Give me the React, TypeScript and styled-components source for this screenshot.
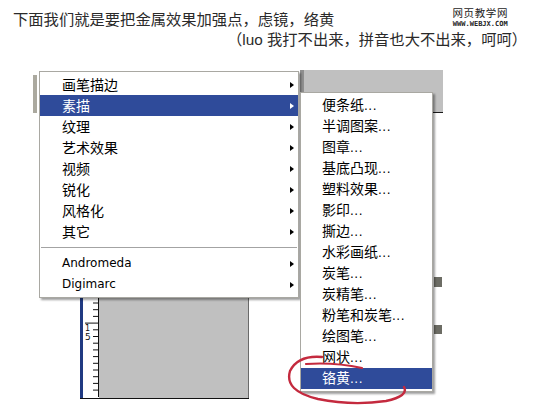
import React from "react";
import styled, { createGlobalStyle } from "styled-components";

const GlobalStyle = createGlobalStyle`
  html, body {
    margin: 0;
    padding: 0;
    background: #ffffff;
  }
  body {
    width: 558px;
    height: 406px;
    overflow: hidden;
    font-family: "Noto Sans CJK SC", sans-serif;
  }
`;

const Page = styled.div`
  position: relative;
  width: 558px;
  height: 406px;
  overflow: hidden;
`;

const Header = styled.header`
  display: flex;
  flex-direction: column;
  padding: 8px 0 0 13px;
  height: 52px;
  box-sizing: border-box;
  color: #2a2a2a;
  font-size: 15.3px;
  line-height: 20px;
`;

const TopRow = styled.div`
  display: flex;
  justify-content: space-between;
  align-items: flex-start;
  height: 20px;
  padding-right: 50px;
`;

const TitleLine = styled.div<{ $indent?: number }>`
  white-space: nowrap;
  padding-left: ${(p) => p.$indent ?? 0}px;
`;

const Latin = styled.span`
  font-family: "Liberation Sans", "Noto Sans CJK SC", sans-serif;
`;

const Watermark = styled.div`
  display: flex;
  flex-direction: column;
  align-items: center;
  margin-top: -3px;
  color: #1c1c1c;
`;

const MarkName = styled.div`
  font-size: 10.5px;
  line-height: 15px;
  letter-spacing: 0.6px;
`;

const MarkUrl = styled.div`
  font-family: "DejaVu Sans Mono", monospace;
  font-size: 7px;
  font-weight: bold;
  line-height: 8px;
`;

// pieces of the photoshop window sitting behind the menus
const Backdrop = styled.div<{ $x: number; $y: number; $w: number; $h: number }>`
  position: absolute;
  left: ${(p) => p.$x}px;
  top: ${(p) => p.$y}px;
  width: ${(p) => p.$w}px;
  height: ${(p) => p.$h}px;
`;

const ScrollBit = styled(Backdrop)`
  background: #aba99f;
`;

const Tab = styled(Backdrop)`
  background: #6c6c64;
`;

const GrayArea = styled(Backdrop)`
  background: #c0c0c0;
  border-left: 4px solid #8f8f8f;
  border-bottom: 1px solid #1a1a1a;
  box-sizing: border-box;
`;

const DocWindow = styled(Backdrop)`
  display: flex;
  border-bottom: 1px solid #111;
`;

const RulerBar = styled.div`
  width: 3px;
  background: #203a82;
`;

const Ruler = styled.svg`
  display: block;
  width: 15px;
  height: 100px;
  background: #ffffff;
  border-right: 1px solid #111;
`;

const Canvas = styled.div`
  flex: 1;
  background: #c0c0c0;
  border-right: 1px solid #6a6a6a;
`;

const Menu = styled.div<{ $x: number; $y: number; $w: number }>`
  position: absolute;
  left: ${(p) => p.$x}px;
  top: ${(p) => p.$y}px;
  width: ${(p) => p.$w}px;
  box-sizing: border-box;
  display: flex;
  flex-direction: column;
  padding: 2px 0;
  background: #ffffff;
  border: 1px solid #a9a8a2;
  box-shadow: 2px 2px 2px rgba(0, 0, 0, 0.38);
`;

const Item = styled.div<{ $active?: boolean; $pad: number }>`
  display: flex;
  align-items: center;
  justify-content: space-between;
  height: 21px;
  padding: 0 4px 0 ${(p) => p.$pad}px;
  background: ${(p) => (p.$active ? "#2f4b9a" : "transparent")};
  color: ${(p) => (p.$active ? "#ffffff" : "#000000")};
`;

const Label = styled.span<{ $latin?: boolean }>`
  font-family: ${(p) =>
    p.$latin
      ? `"DejaVu Sans", sans-serif`
      : `"Noto Sans CJK SC", sans-serif`};
  font-size: ${(p) => (p.$latin ? 12 : 14)}px;
  line-height: 21px;
  white-space: nowrap;
`;

const Dots = styled.span`
  font-family: "DejaVu Sans", sans-serif;
  font-size: 12px;
  letter-spacing: 0.5px;
`;

const Arrow = styled.span<{ $active?: boolean }>`
  width: 0;
  height: 0;
  border-top: 3.5px solid transparent;
  border-bottom: 3.5px solid transparent;
  border-left: 4px solid ${(p) => (p.$active ? "#ffffff" : "#000000")};
`;

const Separator = styled.div`
  height: 11px;
  display: flex;
  align-items: center;
  padding: 0 1px;
  &::after {
    content: "";
    flex: 1;
    height: 1px;
    background: #a3a3a3;
    box-shadow: 0 1px 0 #ffffff;
  }
`;

const Ink = styled.svg`
  position: absolute;
  left: 0;
  top: 0;
  width: 558px;
  height: 406px;
  pointer-events: none;
`;

type Entry = { label: string; latin?: boolean; active?: boolean } | "sep";

const filters: Entry[] = [
  { label: "画笔描边" },
  { label: "素描", active: true },
  { label: "纹理" },
  { label: "艺术效果" },
  { label: "视频" },
  { label: "锐化" },
  { label: "风格化" },
  { label: "其它" },
  "sep",
  { label: "Andromeda", latin: true },
  { label: "Digimarc", latin: true },
];

const sketches = [
  "便条纸",
  "半调图案",
  "图章",
  "基底凸现",
  "塑料效果",
  "影印",
  "撕边",
  "水彩画纸",
  "炭笔",
  "炭精笔",
  "粉笔和炭笔",
  "绘图笔",
  "网状",
  "铬黄",
];

function RulerTicks() {
  const ticks = [];
  for (let i = 0; i < 14; i++) {
    const y = 6 + i * 6.7;
    const long = i === 3;
    ticks.push(
      <line key={i} x1={long ? 2 : 10} y1={y} x2={15} y2={y} stroke="#111" strokeWidth={1} />
    );
  }
  return (
    <Ruler viewBox="0 0 15 100">
      {ticks}
      <text x={2} y={34} fontSize={8} fontFamily="DejaVu Sans, sans-serif" fill="#111">1</text>
      <text x={2} y={43} fontSize={9} fontFamily="DejaVu Sans, sans-serif" fill="#111">5</text>
    </Ruler>
  );
}

function App() {
  return (
    <Page>
      <GlobalStyle />
      <Header>
        <TopRow>
          <TitleLine>下面我们就是要把金属效果加强点，虑镜，络黄</TitleLine>
          <Watermark>
            <MarkName>网页教学网</MarkName>
            <MarkUrl>WWW.WEBJX.COM</MarkUrl>
          </Watermark>
        </TopRow>
        <TitleLine $indent={214}>
          （<Latin>luo </Latin>我打不出来，拼音也大不出来，呵呵）
        </TitleLine>
      </Header>

      <ScrollBit $x={33} $y={75} $w={4} $h={38} />
      <GrayArea $x={300} $y={70} $w={143} $h={43} />
      <Tab $x={434} $y={277} $w={8} $h={10} />
      <Tab $x={434} $y={325} $w={8} $h={9} />
      <DocWindow $x={80} $y={297} $w={169} $h={101}>
        <RulerBar />
        <RulerTicks />
        <Canvas />
      </DocWindow>

      <Menu $x={39} $y={71} $w={260}>
        {filters.map((entry, i) =>
          entry === "sep" ? (
            <Separator key={i} />
          ) : (
            <Item key={i} $pad={22} $active={entry.active}>
              <Label $latin={entry.latin}>{entry.label}</Label>
              <Arrow $active={entry.active} />
            </Item>
          )
        )}
      </Menu>

      <Menu $x={300} $y={92} $w={133}>
        {sketches.map((name, i) => (
          <Item key={name} $pad={21} $active={i === sketches.length - 1}>
            <Label>
              {name}
              <Dots>...</Dots>
            </Label>
          </Item>
        ))}
      </Menu>

      <Ink viewBox="0 0 558 406">
        <path
          d="M 322 357 Q 298 355 290 371 Q 284 391 318 399 Q 352 406 386 401 Q 409 396 404 387"
          fill="none"
          stroke="#c42a3e"
          strokeWidth={2.4}
          strokeLinecap="round"
        />
        <path
          d="M 306 364 Q 334 362 362 368"
          fill="none"
          stroke="#c42a3e"
          strokeWidth={2.2}
          strokeLinecap="round"
        />
      </Ink>
    </Page>
  );
}

export default App;
